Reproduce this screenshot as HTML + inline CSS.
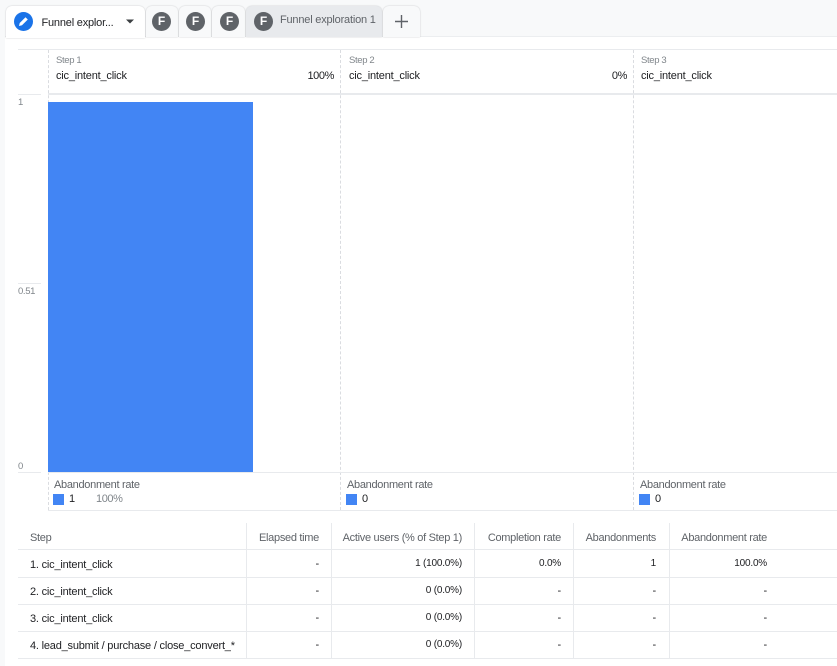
<!DOCTYPE html>
<html><head><meta charset="utf-8">
<style>
html,body{margin:0;padding:0}
body{width:837px;height:666px;overflow:hidden;position:relative;background:#fff;font-family:"Liberation Sans",sans-serif;color:#202124}
div,span{position:absolute;white-space:nowrap;box-sizing:border-box}
.t{font-size:11px;line-height:14px;letter-spacing:-.2px}
.g{color:#5f6368;letter-spacing:-.3px}
.n{font-size:10px;letter-spacing:-.2px}
.sm{font-size:9.5px;line-height:12px;color:#80868b;letter-spacing:-.35px}
.tab{top:6px;height:31px;background:#f8f9fa;border-radius:6px 6px 0 0;box-shadow:0 0 1.5px rgba(60,64,67,.3)}
.f{width:19px;height:19px;border-radius:50%;background:#5f6368;color:#fff;font-weight:bold;font-size:12px;line-height:19px;text-align:center;top:6px}
.h{background:#e8eaed}
.dash{width:0;border-left:1px dashed #dadce0;top:50px;height:460px}
.sq{width:11px;height:11px;background:#4285f4;top:494px}
.r{text-align:right}
</style></head><body>
<div style="left:0;top:0;width:837px;height:37px;background:#f8f9fa"></div>
<div style="left:0;top:0;width:5px;height:666px;background:#f8f9fa"></div>
<div style="left:5px;top:36px;width:832px;height:1px;background:#eceef0"></div>

<div class="tab" style="left:6px;width:139px;background:#fff;height:32px"></div>
<svg style="position:absolute;left:14px;top:12px" width="19" height="19" viewBox="0 0 19 19"><circle cx="9.5" cy="9.5" r="9.5" fill="#1a73e8"/><path d="M5 14l.7-3 5.8-5.8 2.3 2.3-5.8 5.8z" fill="#fff"/></svg>
<div class="t" style="left:41.5px;top:16px;letter-spacing:-.2px">Funnel explor...</div>
<svg style="position:absolute;left:126px;top:19px" width="8" height="5"><path d="M0 .5h8L4 4.5z" fill="#3c4043"/></svg>

<div class="tab" style="left:146px;width:32px"><div class="f" style="left:6px">F</div></div>
<div class="tab" style="left:179px;width:32px"><div class="f" style="left:7px">F</div></div>
<div class="tab" style="left:212px;width:33px"><div class="f" style="left:8px">F</div></div>
<div class="tab" style="left:246px;width:136px;background:#e8eaed"><div class="f" style="left:8px">F</div>
<div class="t g" style="left:34px;top:7px;font-size:11px;letter-spacing:-.2px">Funnel exploration 1</div></div>
<div class="tab" style="left:383px;width:37px"></div>
<svg style="position:absolute;left:395px;top:15px" width="13" height="13"><path d="M6.5 0v13M0 6.5h13" stroke="#5f6368" stroke-width="1.4"/></svg>

<!-- chart -->
<div class="h" style="left:18px;top:49px;width:819px;height:1px"></div>
<div class="h" style="left:48px;top:93px;width:789px;height:2px"></div>
<div class="dash" style="left:48px"></div>
<div class="dash" style="left:340px"></div>
<div class="dash" style="left:633px"></div>

<div class="sm" style="left:56px;top:55px">Step 1</div>
<div class="t" style="left:56px;top:69px">cic_intent_click</div>
<div class="t r" style="right:503px;top:69px;letter-spacing:-.4px">100%</div>
<div class="sm" style="left:349px;top:55px">Step 2</div>
<div class="t" style="left:349px;top:69px">cic_intent_click</div>
<div class="t r" style="right:210px;top:69px;letter-spacing:-.4px">0%</div>
<div class="sm" style="left:641px;top:55px">Step 3</div>
<div class="t" style="left:641px;top:69px">cic_intent_click</div>

<div class="h" style="left:18px;top:94px;width:23px;height:1px"></div>
<div class="sm" style="left:18px;top:97px">1</div>
<div class="h" style="left:18px;top:283px;width:23px;height:1px"></div>
<div class="sm" style="left:18px;top:286px">0.51</div>
<div class="h" style="left:18px;top:472px;width:23px;height:1px"></div>
<div class="sm" style="left:18px;top:461px">0</div>

<div style="left:48px;top:102px;width:205px;height:370px;background:#4285f4"></div>
<div class="h" style="left:48px;top:472px;width:789px;height:1px"></div>
<div class="h" style="left:48px;top:510px;width:789px;height:1px"></div>

<div class="t g" style="left:54px;top:478px">Abandonment rate</div>
<div class="sq" style="left:53px"></div>
<div class="t" style="left:69px;top:492px">1</div>
<div class="t" style="left:96px;top:492px;color:#80868b;letter-spacing:-.4px">100%</div>
<div class="t g" style="left:347px;top:478px">Abandonment rate</div>
<div class="sq" style="left:346px"></div>
<div class="t" style="left:362px;top:492px">0</div>
<div class="t g" style="left:640px;top:478px">Abandonment rate</div>
<div class="sq" style="left:639px"></div>
<div class="t" style="left:655px;top:492px">0</div>

<!-- table -->
<div class="h" style="left:18px;top:549px;width:819px;height:1px"></div>
<div class="h" style="left:18px;top:577px;width:819px;height:1px"></div>
<div class="h" style="left:18px;top:604px;width:819px;height:1px"></div>
<div class="h" style="left:18px;top:631px;width:819px;height:1px"></div>
<div class="h" style="left:18px;top:658px;width:819px;height:1px"></div>
<div class="h" style="left:246px;top:523px;width:1px;height:135px"></div>
<div class="h" style="left:331px;top:523px;width:1px;height:135px"></div>
<div class="h" style="left:474px;top:523px;width:1px;height:135px"></div>
<div class="h" style="left:573px;top:523px;width:1px;height:135px"></div>
<div class="h" style="left:669px;top:523px;width:1px;height:135px"></div>

<div class="t g" style="left:30px;top:531px">Step</div>
<div class="t g r" style="right:518px;top:531px">Elapsed time</div>
<div class="t g r" style="right:375px;top:531px">Active users (% of Step 1)</div>
<div class="t g r" style="right:276px;top:531px">Completion rate</div>
<div class="t g r" style="right:181px;top:531px">Abandonments</div>
<div class="t g r" style="right:70px;top:531px">Abandonment rate</div>

<div class="t" style="left:30px;top:558px">1. cic_intent_click</div>
<div class="t" style="left:30px;top:585px">2. cic_intent_click</div>
<div class="t" style="left:30px;top:612px">3. cic_intent_click</div>
<div class="t" style="left:30px;top:639px">4. lead_submit / purchase / close_convert_*</div>

<div class="t r" style="right:518px;top:557px">-</div>
<div class="t r" style="right:518px;top:584px">-</div>
<div class="t r" style="right:518px;top:611px">-</div>
<div class="t r" style="right:518px;top:638px">-</div>

<div class="t r n" style="right:375px;top:557px">1 (100.0%)</div>
<div class="t r n" style="right:375px;top:584px">0 (0.0%)</div>
<div class="t r n" style="right:375px;top:611px">0 (0.0%)</div>
<div class="t r n" style="right:375px;top:638px">0 (0.0%)</div>

<div class="t r n" style="right:276px;top:557px">0.0%</div>
<div class="t r" style="right:276px;top:584px">-</div>
<div class="t r" style="right:276px;top:611px">-</div>
<div class="t r" style="right:276px;top:638px">-</div>

<div class="t r n" style="right:181px;top:557px">1</div>
<div class="t r" style="right:181px;top:584px">-</div>
<div class="t r" style="right:181px;top:611px">-</div>
<div class="t r" style="right:181px;top:638px">-</div>

<div class="t r n" style="right:70px;top:557px">100.0%</div>
<div class="t r" style="right:70px;top:584px">-</div>
<div class="t r" style="right:70px;top:611px">-</div>
<div class="t r" style="right:70px;top:638px">-</div>
</body></html>
